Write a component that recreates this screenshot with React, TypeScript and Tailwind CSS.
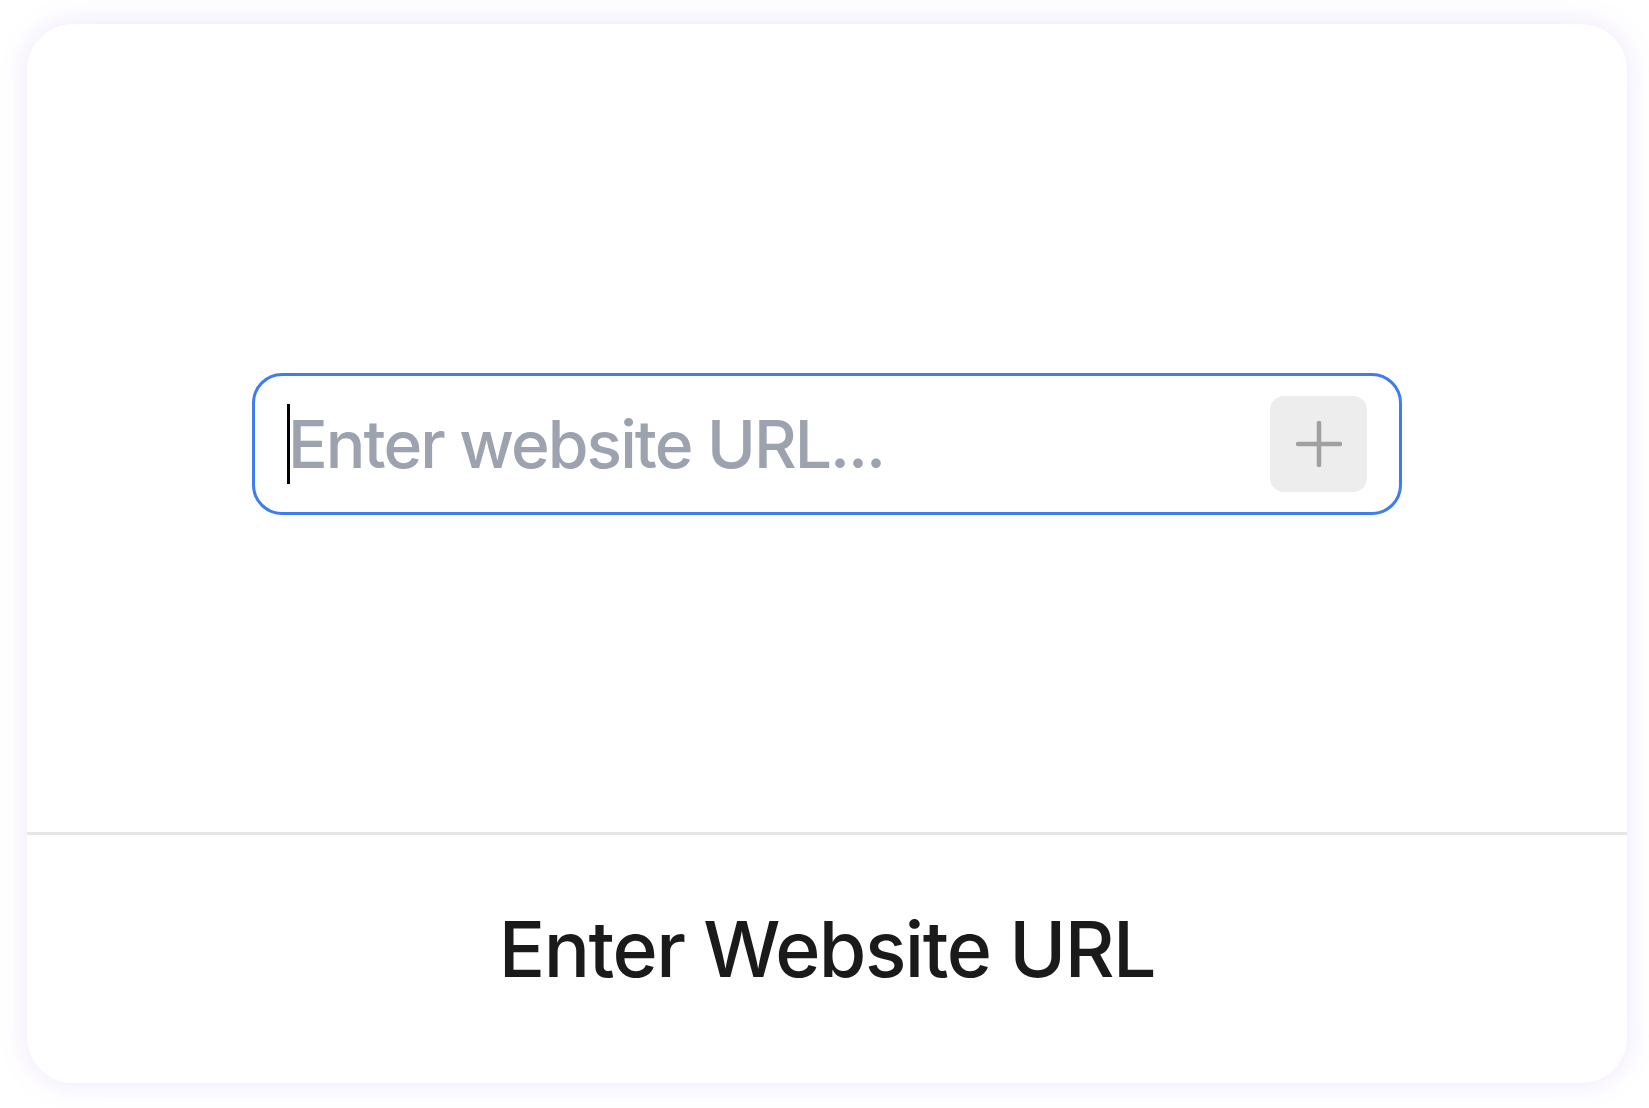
import React from "react";

export default function App() {
  return (
    <div className="w-[1649px] h-[1108px] bg-white pt-[24px] pl-[27px]" style={{ fontFamily: "Inter, 'Noto Sans', sans-serif" }}>
      <div className="w-[1600px] h-[1059px] rounded-[46px] bg-white shadow-[0_0_30px_rgba(124,58,237,0.13)] flex flex-col overflow-hidden">
        <div className="h-[808px] flex items-center justify-center pt-[32px]">
          <div className="relative w-[1150px] h-[142px] border-[3px] border-[#3e7cf2] rounded-[30px] flex items-center pl-[33px] pr-[32px]">
            <div className="absolute left-[32px] top-[28px] w-[3px] h-[80px] bg-black" />
            <input
              className="flex-1 min-w-0 bg-transparent outline-none text-[66px] font-medium tracking-[-0.03em] text-[#1f2937] placeholder:text-[#9ca3af] caret-transparent"
              placeholder="Enter website URL..."
              style={{ fontFamily: "Inter, 'Noto Sans', sans-serif" }}
            />
            <button className="w-[97px] h-[96px] rounded-[14px] bg-[#ededed] flex items-center justify-center shrink-0">
              <svg width="46" height="46" viewBox="0 0 46 46" fill="none" stroke="#a0a0a0" strokeWidth="4.5" strokeLinecap="round">
                <line x1="23" y1="2" x2="23" y2="44" />
                <line x1="2" y1="23" x2="44" y2="23" />
              </svg>
            </button>
          </div>
        </div>
        <div className="h-[3px] bg-[#e6e6e6]" />
        <div className="flex-1 flex items-center justify-center pb-[20px]">
          <span className="text-[77px] font-medium tracking-[-0.02em] text-[#1a1a1a] leading-none">Enter Website URL</span>
        </div>
      </div>
    </div>
  );
}
